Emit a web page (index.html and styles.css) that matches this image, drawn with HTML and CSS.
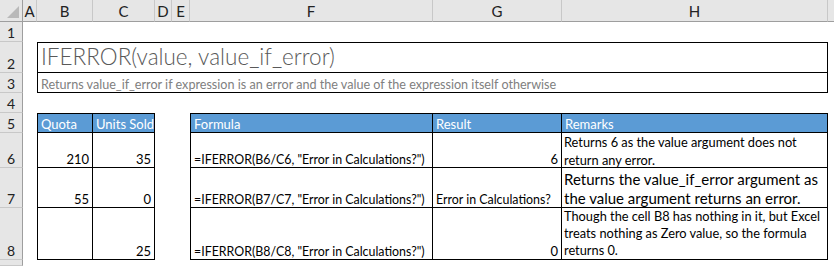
FILE: index.html
```html
<!DOCTYPE html>
<html lang="en">
<head>
  <meta charset="UTF-8" />
  <title>IFERROR</title>
  <link rel="stylesheet" href="styles.css">
</head>
<body>
  <div class="sheet">
    <!-- column headings -->
    <div class="corner"><span class="tri"></span></div>
    <div class="colhd">A</div>
    <div class="colhd">B</div>
    <div class="colhd">C</div>
    <div class="colhd">D</div>
    <div class="colhd">E</div>
    <div class="colhd">F</div>
    <div class="colhd">G</div>
    <div class="colhd">H</div>
    <div class="colhd last"></div>

    <!-- row headings -->
    <div class="rowhd" style="grid-row: 2">1</div>
    <div class="rowhd" style="grid-row: 3">2</div>
    <div class="rowhd" style="grid-row: 4">3</div>
    <div class="rowhd" style="grid-row: 5">4</div>
    <div class="rowhd" style="grid-row: 6">5</div>
    <div class="rowhd" style="grid-row: 7">6</div>
    <div class="rowhd" style="grid-row: 8">7</div>
    <div class="rowhd" style="grid-row: 9">8</div>
    <div class="rowhd" style="grid-row: 10"></div>

    <!-- title block -->
    <div class="title">IFERROR(value, value_if_error)</div>
    <div class="subtitle">Returns value_if_error if expression is an error and the value of the expression itself otherwise</div>

    <!-- data table -->
    <div class="cell hd left top" style="grid-area: 6 / 3">Quota</div>
    <div class="cell hd top" style="grid-area: 6 / 4">Units Sold</div>
    <div class="cell num left" style="grid-area: 7 / 3">210</div>
    <div class="cell num" style="grid-area: 7 / 4">35</div>
    <div class="cell num left" style="grid-area: 8 / 3">55</div>
    <div class="cell num" style="grid-area: 8 / 4">0</div>
    <div class="cell num left" style="grid-area: 9 / 3"></div>
    <div class="cell num" style="grid-area: 9 / 4">25</div>

    <!-- formula table -->
    <div class="cell hd left top" style="grid-area: 6 / 7">Formula</div>
    <div class="cell hd top" style="grid-area: 6 / 8">Result</div>
    <div class="cell hd top" style="grid-area: 6 / 9">Remarks</div>

    <div class="cell fx left" style="grid-area: 7 / 7">=IFERROR(B6/C6, "Error in Calculations?")</div>
    <div class="cell num" style="grid-area: 7 / 8">6</div>
    <div class="cell note" style="grid-area: 7 / 9">Returns 6 as the value argument does not return any error.</div>

    <div class="cell fx left" style="grid-area: 8 / 7">=IFERROR(B7/C7, "Error in Calculations?")</div>
    <div class="cell fx" style="grid-area: 8 / 8">Error in Calculations?</div>
    <div class="cell note big" style="grid-area: 8 / 9">Returns the value_if_error argument as the value argument returns an error.</div>

    <div class="cell fx left" style="grid-area: 9 / 7">=IFERROR(B8/C8, "Error in Calculations?")</div>
    <div class="cell num" style="grid-area: 9 / 8">0</div>
    <div class="cell note tight" style="grid-area: 9 / 9">Though the cell B8 has nothing in it, but Excel treats nothing as Zero value, so the formula returns 0.</div>
  </div>
</body>
</html>
```

FILE: styles.css
```css
body {
  margin: 0;
  background: #fff;
  font-family: Lato, "Liberation Sans", sans-serif;
  color: #000;
  overflow: hidden;
}

.sheet {
  display: grid;
  grid-template-columns: 23px 14px 56px 62px 17px 18px 243px 129px 266px 1fr;
  grid-template-rows: 22px 20px 31px 20px 20px 20px 35px 40px 52px 1fr;
  width: 834px;
  height: 266px;
}

.corner {
  grid-area: 1 / 1;
  background: #e6e6e6;
  border-right: 1px solid #9e9e9e;
  border-bottom: 1px solid #9e9e9e;
  position: relative;
}

.tri {
  position: absolute;
  right: 3px;
  bottom: 3px;
  width: 0;
  height: 0;
  border-left: 12px solid transparent;
  border-bottom: 12px solid #b9b9b9;
}

.colhd {
  grid-row: 1;
  background: #e6e6e6;
  border-right: 1px solid #c8c8c8;
  border-bottom: 1px solid #9e9e9e;
  display: flex;
  align-items: center;
  justify-content: center;
  font-size: 15px;
  color: #222;
}

.colhd.last {
  border-right: none;
}

.rowhd {
  grid-column: 1;
  background: #e6e6e6;
  border-right: 1px solid #9e9e9e;
  border-bottom: 1px solid #c8c8c8;
  display: flex;
  align-items: flex-end;
  justify-content: center;
  font-size: 14px;
  color: #222;
}

.title {
  grid-area: 3 / 3 / 4 / 10;
  border: 1px solid #000;
  font-weight: 300;
  font-size: 22.5px;
  color: #595959;
  padding: 0 0 2px 3px;
  display: flex;
  align-items: flex-end;
  line-height: 27px;
}

.subtitle {
  grid-area: 4 / 3 / 5 / 10;
  border: 1px solid #000;
  border-top: none;
  font-size: 12.6px;
  color: #808080;
  padding-left: 3px;
  display: flex;
  align-items: flex-end;
}

.cell {
  border-right: 1px solid #000;
  border-bottom: 1px solid #000;
  font-size: 13px;
  padding: 0 3px;
  display: flex;
  align-items: flex-end;
  white-space: nowrap;
}

.cell.left {
  border-left: 1px solid #000;
}

.cell.top {
  border-top: 1px solid #000;
}

.cell.hd {
  background: #5b9bd5;
  color: #fff;
}

.cell.fx {
  font-size: 12.4px;
}

.cell.num {
  justify-content: flex-end;
}

.cell.note {
  white-space: normal;
  font-size: 12.8px;
  line-height: 18px;
  align-items: flex-start;
  padding: 0 2px;
}

.cell.note.tight {
  line-height: 17px;
}

.cell.note.big {
  font-size: 15px;
  line-height: 19px;
  padding-top: 2px;
}
```
